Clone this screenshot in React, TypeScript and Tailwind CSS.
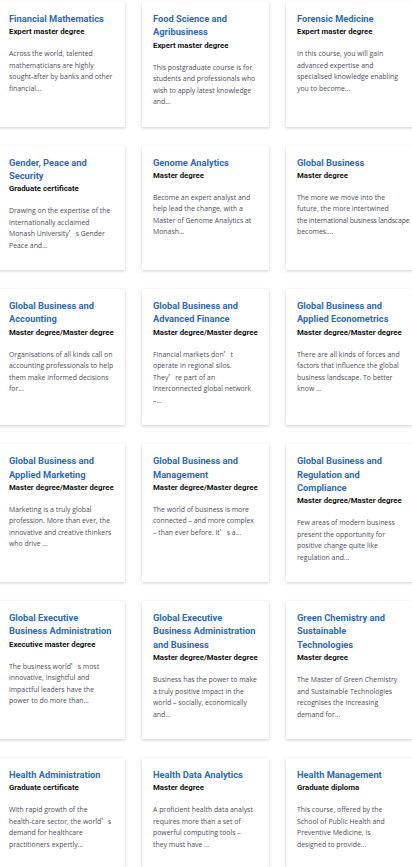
import React from "react";

type Course = { title: string[]; type: string; desc: string[] };

const courses: Course[] = [
  { title: ["Financial Mathematics"], type: "Expert master degree", desc: ["Across the world, talented", "mathematicians are highly", "sought-after by banks and other", "financial..."] },
  { title: ["Food Science and", "Agribusiness"], type: "Expert master degree", desc: ["This postgraduate course is for", "students and professionals who", "wish to apply latest knowledge", "and..."] },
  { title: ["Forensic Medicine"], type: "Expert master degree", desc: ["In this course, you will gain", "advanced expertise and", "specialised knowledge enabling", "you to become..."] },
  { title: ["Gender, Peace and", "Security"], type: "Graduate certificate", desc: ["Drawing on the expertise of the", "internationally acclaimed", "Monash University’s Gender", "Peace and..."] },
  { title: ["Genome Analytics"], type: "Master degree", desc: ["Become an expert analyst and", "help lead the change, with a", "Master of Genome Analytics at", "Monash..."] },
  { title: ["Global Business"], type: "Master degree", desc: ["The more we move into the", "future, the more intertwined", "the international business landscape", "becomes...."] },
  { title: ["Global Business and", "Accounting"], type: "Master degree/Master degree", desc: ["Organisations of all kinds call on", "accounting professionals to help", "them make informed decisions", "for..."] },
  { title: ["Global Business and", "Advanced Finance"], type: "Master degree/Master degree", desc: ["Financial markets don’t", "operate in regional silos.", "They’re part of an", "interconnected global network", "–..."] },
  { title: ["Global Business and", "Applied Econometrics"], type: "Master degree/Master degree", desc: ["There are all kinds of forces and", "factors that influence the global", "business landscape. To better", "know ..."] },
  { title: ["Global Business and", "Applied Marketing"], type: "Master degree/Master degree", desc: ["Marketing is a truly global", "profession. More than ever, the", "innovative and creative thinkers", "who drive ..."] },
  { title: ["Global Business and", "Management"], type: "Master degree/Master degree", desc: ["The world of business is more", "connected – and more complex", "– than ever before. It’s a..."] },
  { title: ["Global Business and", "Regulation and", "Compliance"], type: "Master degree/Master degree", desc: ["Few areas of modern business", "present the opportunity for", "positive change quite like", "regulation and..."] },
  { title: ["Global Executive", "Business Administration"], type: "Executive master degree", desc: ["The business world’s most", "innovative, insightful and", "impactful leaders have the", "power to do more than..."] },
  { title: ["Global Executive", "Business Administration", "and Business"], type: "Master degree/Master degree", desc: ["Business has the power to make", "a truly positive impact in the", "world – socially, economically", "and..."] },
  { title: ["Green Chemistry and", "Sustainable", "Technologies"], type: "Master degree", desc: ["The Master of Green Chemistry", "and Sustainable Technologies", "recognises the increasing", "demand for..."] },
  { title: ["Health Administration"], type: "Graduate certificate", desc: ["With rapid growth of the", "health-care sector, the world’s", "demand for healthcare", "practitioners expertly..."] },
  { title: ["Health Data Analytics"], type: "Master degree", desc: ["A proficient health data analyst", "requires more than a set of", "powerful computing tools –", "they must have ..."] },
  { title: ["Health Management"], type: "Graduate diploma", desc: ["This course, offered by the", "School of Public Health and", "Preventive Medicine, is", "designed to provide..."] },
];

function Line({ text }: { text: string }) {
  const parts = text.split("’");
  const tight = text.length > 34;
  return (
    <span className={tight ? "block whitespace-nowrap tracking-[-0.15px]" : "block whitespace-nowrap"}>
      {parts.map((p, i) => (
        <React.Fragment key={i}>
          {i > 0 && (
            <span className="font-['Noto_Sans_CJK_SC',sans-serif]">’</span>
          )}
          {p}
        </React.Fragment>
      ))}
    </span>
  );
}

function Card({ c }: { c: Course }) {
  return (
    <div className="bg-white shadow-[0_1px_3px_rgba(0,0,0,0.2)] pt-[10px] pb-[19px] px-[11px]">
      <h3 className="font-['Roboto',sans-serif] font-bold text-[9.3px] leading-[13.3px] text-[#2c6bb4]">
        {c.title.map((t, i) => (
          <span key={i} className="block whitespace-nowrap">{t}</span>
        ))}
      </h3>
      <div className="mt-[1px] font-['Roboto',sans-serif] font-bold text-[7.8px] leading-[11px] text-[#141414] whitespace-nowrap">
        {c.type}
      </div>
      <div className="mt-[11px] font-['Open_Sans',sans-serif] text-[6.9px] leading-[11.5px] text-[#4d4b5a]">
        {c.desc.map((d, i) => (
          <Line key={i} text={d} />
        ))}
      </div>
    </div>
  );
}

export default function App() {
  return (
    <div className="w-[412px] h-[867px] overflow-hidden bg-white">
      <div className="-ml-[2px] w-[415px] pt-[2px] grid grid-cols-3 gap-x-[17px] gap-y-[19px]">
        {courses.map((c, i) => (
          <Card key={i} c={c} />
        ))}
      </div>
    </div>
  );
}
